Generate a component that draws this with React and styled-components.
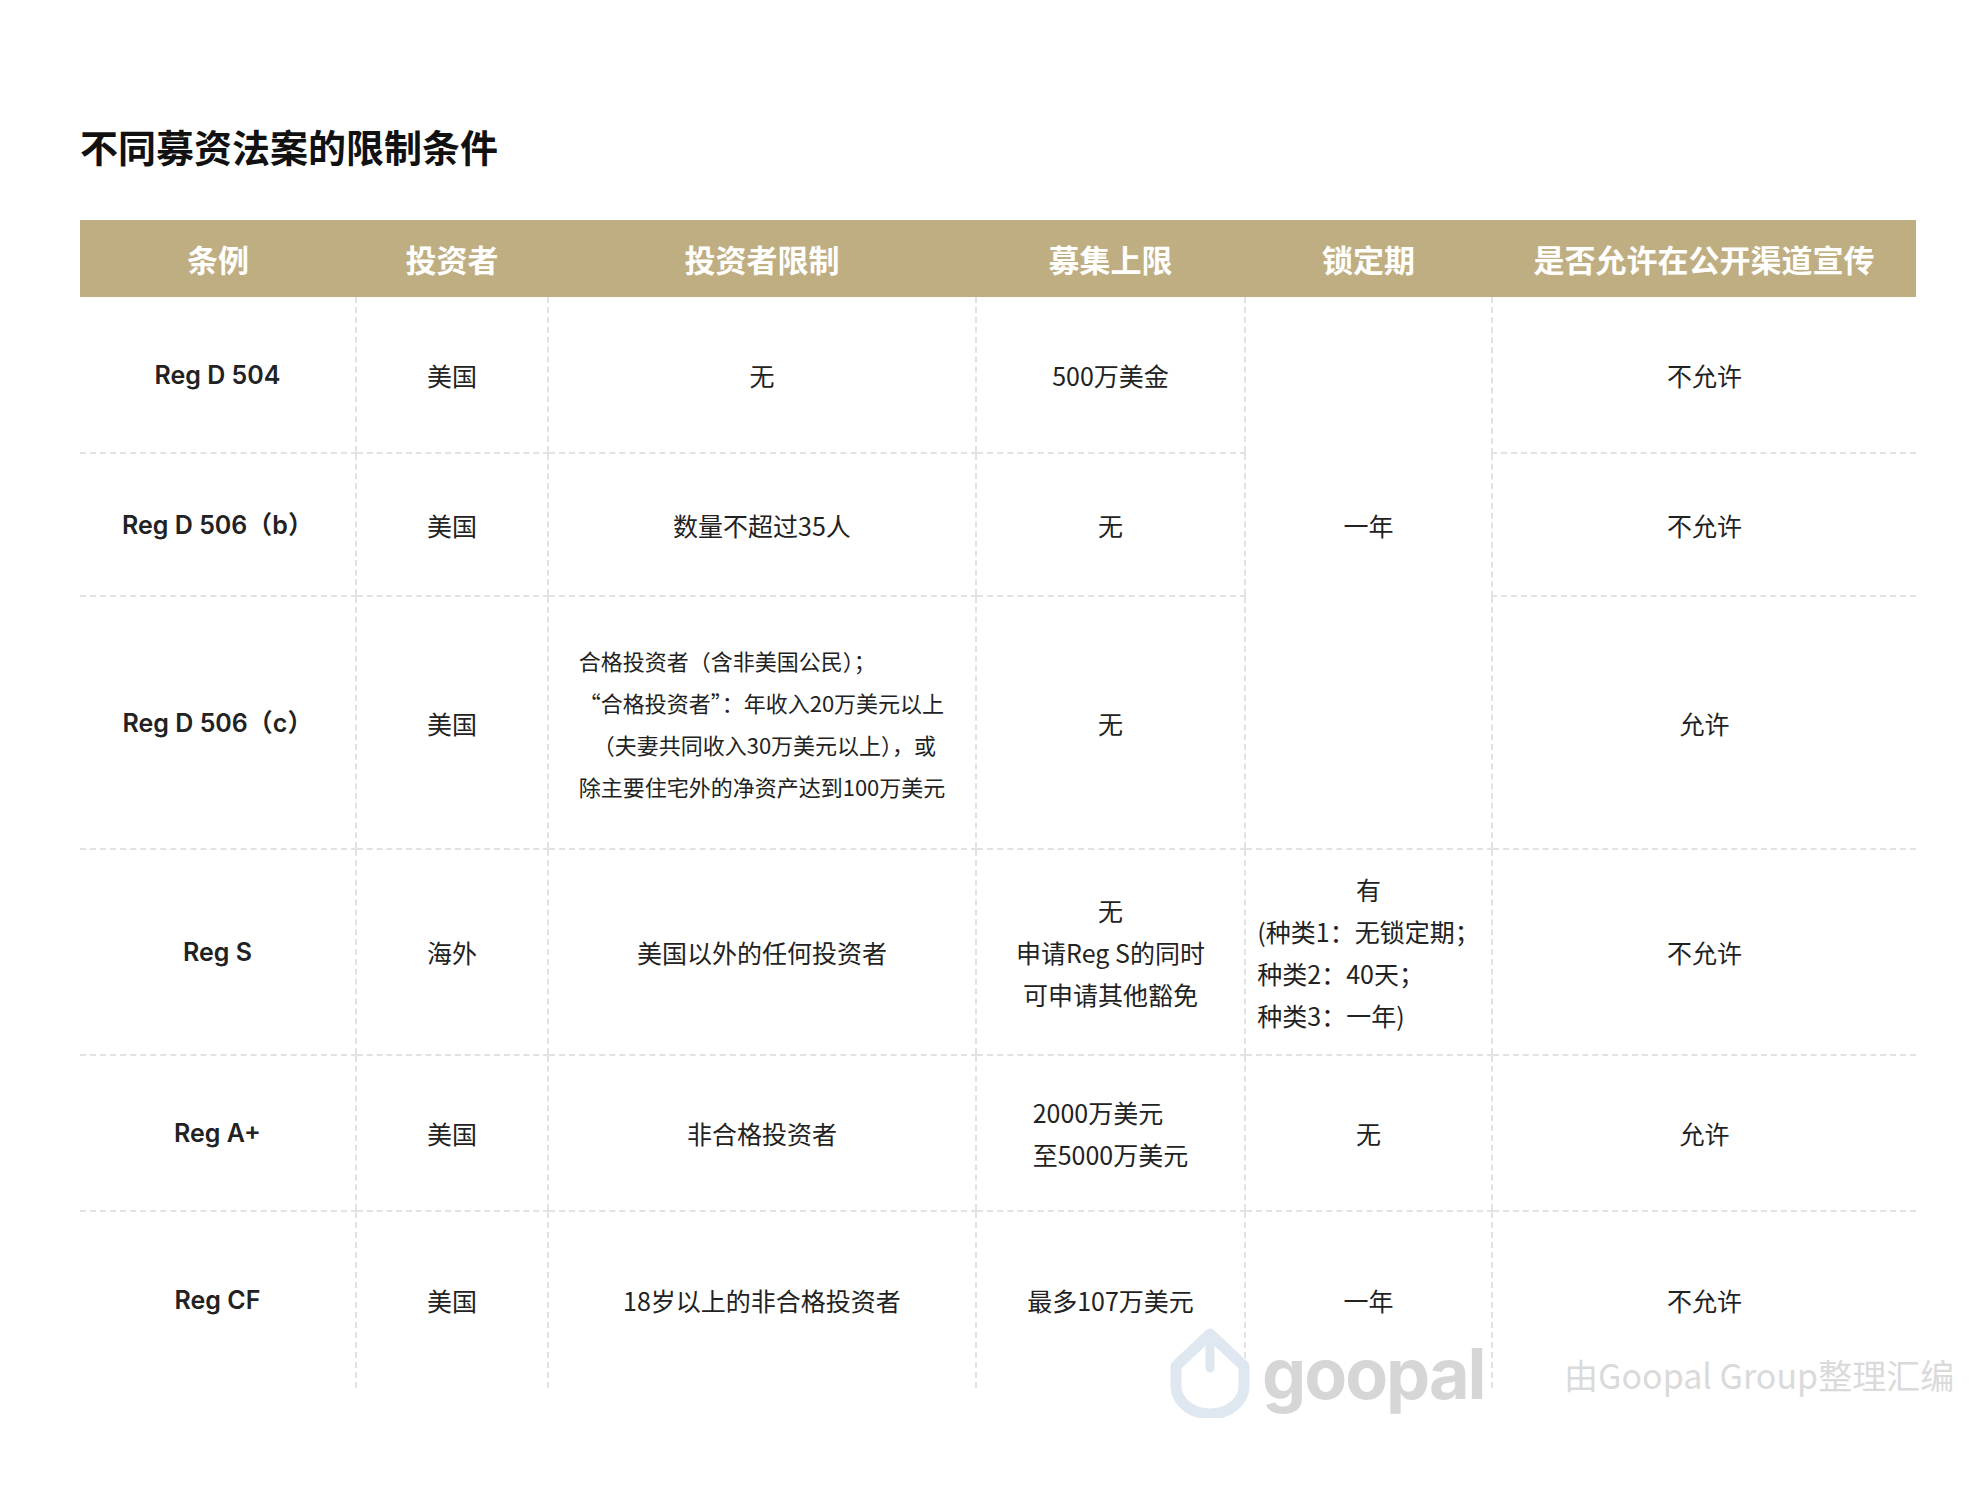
import React from "react";
import styled, { createGlobalStyle } from "styled-components";

const Global = createGlobalStyle`
  body { margin: 0; background: #fff; font-family: "Noto Sans CJK SC", "Noto Sans", sans-serif; color: #222; }
`;

const Page = styled.div`
  position: relative;
  width: 1984px;
  height: 1488px;
  padding: 118px 68px 0 80px;
  box-sizing: border-box;
`;

const Title = styled.h1`
  margin: 0 0 46px;
  font-size: 38px;
  font-weight: 700;
  color: #111;
  line-height: 56px;
`;

const Table = styled.table`
  width: 1836px;
  border-collapse: collapse;
  table-layout: fixed;
`;

const Th = styled.th`
  background: #bfae82;
  color: #fff;
  font-size: 31px;
  font-weight: 700;
  height: 77px;
  padding: 0;
`;

const Td = styled.td`
  height: ${(p) => p.h}px;
  padding: 0 8px;
  text-align: center;
  font-size: 25px;
  line-height: 42px;
  color: #222;
  font-weight: ${(p) => (p.bold ? 600 : 400)};
  font-family: ${(p) => (p.bold ? '"Inter", "Noto Sans CJK SC", sans-serif' : 'inherit')};
  border-left: ${(p) => (p.first ? "none" : "2px dashed #e2e2e2")};
  border-bottom: ${(p) => (p.noBottom ? "none" : "2px dashed #e2e2e2")};
  vertical-align: middle;
`;

const Block = styled.div`
  display: inline-block;
  text-align: left;
  font-size: ${(p) => p.size || 25}px;
`;

const Mark = styled.div`
  position: absolute;
  left: 1168px;
  top: 1328px;
  display: flex;
  align-items: center;
  gap: 10px;
`;

const MarkWord = styled.span`
  font-family: "Inter", sans-serif;
  font-weight: 700;
  font-size: 70px;
  color: #d6d6d6;
  letter-spacing: -2px;
`;

const Credit = styled.div`
  position: absolute;
  left: 1564px;
  top: 1350px;
  font-size: 34px;
  color: #dadada;
`;

const cols = [276, 192, 428, 269, 247, 424];
const heads = ["条例", "投资者", "投资者限制", "募集上限", "锁定期", "是否允许在公开渠道宣传"];

const rows = [
  { h: 155, c: ["Reg D 504", "美国", "无", "500万美金", "", "不允许"], lockNo: true },
  { h: 141, c: ["Reg D 506（b）", "美国", "数量不超过35人", "无", "一年", "不允许"], lockNo: true },
  {
    h: 251,
    c: [
      "Reg D 506（c）",
      "美国",
      <Block size={22}>
        合格投资者（含非美国公民）；<br />“合格投资者”：年收入20万美元以上<br />
        <span style={{ paddingLeft: 14 }}>（夫妻共同收入30万美元以上），或</span><br />除主要住宅外的净资产达到100万美元
      </Block>,
      "无",
      "",
      "允许",
    ],
  },
  {
    h: 204,
    c: [
      "Reg S",
      "海外",
      "美国以外的任何投资者",
      <>无<br />申请Reg S的同时<br /><Block>可申请其他豁免</Block></>,
      <>有<br /><Block>(种类1：无锁定期；<br />种类2：40天；<br />种类3：一年)</Block></>,
      "不允许",
    ],
  },
  { h: 154, c: ["Reg A+", "美国", "非合格投资者", <Block>2000万美元<br />至5000万美元</Block>, "无", "允许"] },
  { h: 176, c: ["Reg CF", "美国", "18岁以上的非合格投资者", "最多107万美元", "一年", "不允许"], last: true },
];

function Logo() {
  return (
    <svg width="84" height="90" viewBox="0 0 84 90">
      <path d="M42 6 L76 38 V58 A34 28 0 0 1 8 58 V38 Z" fill="none" stroke="#dfe7f1" strokeWidth="11" strokeLinejoin="round" />
      <path d="M42 8 V40" stroke="#dfe7f1" strokeWidth="9" strokeLinecap="round" />
    </svg>
  );
}

export default function App() {
  return (
    <Page>
      <Global />
      <Title>不同募资法案的限制条件</Title>
      <Table>
        <colgroup>
          {cols.map((w, i) => <col key={i} style={{ width: w }} />)}
        </colgroup>
        <thead>
          <tr>{heads.map((h) => <Th key={h}>{h}</Th>)}</tr>
        </thead>
        <tbody>
          {rows.map((r, i) => (
            <tr key={i}>
              {r.c.map((v, j) => (
                <Td
                  key={j}
                  h={r.h}
                  first={j === 0}
                  bold={j === 0}
                  noBottom={r.last || (j === 4 && r.lockNo)}
                >
                  {v}
                </Td>
              ))}
            </tr>
          ))}
        </tbody>
      </Table>
      <Mark>
        <Logo />
        <MarkWord>goopal</MarkWord>
      </Mark>
      <Credit>由Goopal Group整理汇编</Credit>
    </Page>
  );
}
